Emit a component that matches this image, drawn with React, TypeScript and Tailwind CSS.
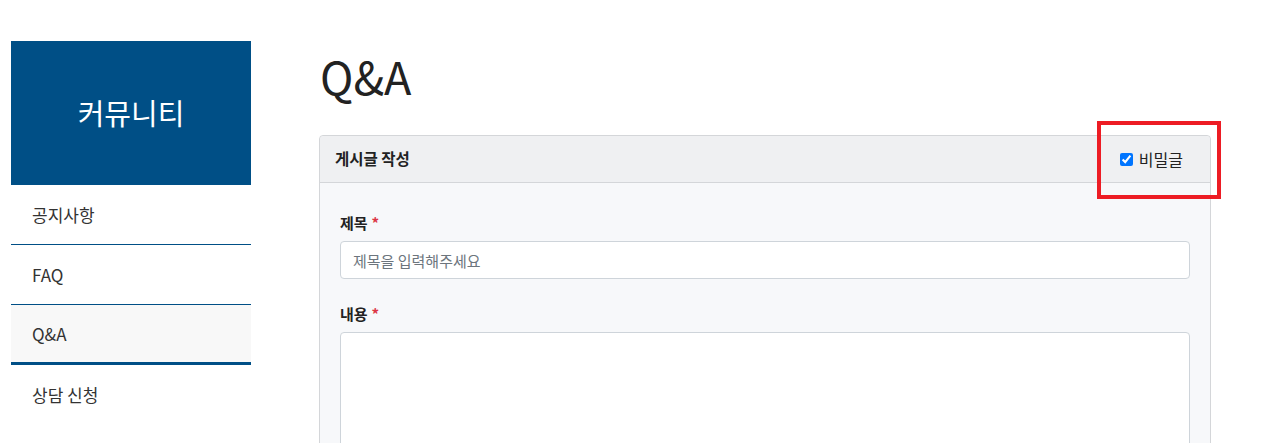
import React from "react";

const font = { fontFamily: '"Noto Sans CJK KR", "Noto Sans", sans-serif' };

function SideItem(props: { label: string; active?: boolean; last?: boolean }) {
  const { label, active, last } = props;
  let border = "border-b border-[#004f86]";
  if (active) border = "border-b-[3px] border-[#004f86] bg-[#f8f8f8]";
  if (last) border = "";
  return (
    <div className={`flex h-[60px] items-center pl-[21px] text-[17px] text-[#333] ${border}`}>
      {label}
    </div>
  );
}

export default function App() {
  return (
    <div className="min-h-[443px] w-full bg-white" style={font}>
      <div className="flex gap-[68px] pl-[11px] pt-[41px]">
        <aside className="w-[240px] shrink-0">
          <div className="flex h-[144px] items-center justify-center bg-[#004f86] text-[29px] text-white">
            커뮤니티
          </div>
          <SideItem label="공지사항" />
          <SideItem label="FAQ" />
          <SideItem label="Q&A" active />
          <SideItem label="상담 신청" last />
        </aside>

        <main className="w-[892px]">
          <h1 className="ml-px mt-[12px] h-[82px] text-[45px] leading-[45px] text-[#222]">Q&A</h1>

          <div className="relative rounded-[4px] border border-[#d4d6d9] bg-[#f7f8fa]">
            <div className="flex h-[47px] items-center justify-between rounded-t-[4px] border-b border-[#d4d6d9] bg-[#eff0f2] px-[15px]">
              <span className="text-[15.5px] font-bold text-[#222]">게시글 작성</span>
              <label className="mr-[12px] flex items-center gap-[6px] text-[16px] text-[#222]">
                <input type="checkbox" defaultChecked className="h-[13px] w-[13px] accent-[#0075ff]" />
                비밀글
              </label>
            </div>

            <div className="px-5 pt-[30px] pb-10">
              <div className="mb-[8px] flex items-center gap-1 text-[15px] font-bold leading-5 text-[#222]">
                제목 <span className="text-[#dc3545]">*</span>
              </div>
              <input
                placeholder="제목을 입력해주세요"
                className="h-[38px] w-full rounded-[4px] border border-[#ced4da] bg-white px-3 text-[15px] text-[#333] placeholder:text-[#6c757d] outline-none"
              />

              <div className="mb-[8px] mt-[25px] flex items-center gap-1 text-[15px] font-bold leading-5 text-[#222]">
                내용 <span className="text-[#dc3545]">*</span>
              </div>
              <textarea className="h-[200px] w-full resize-none rounded-[4px] border border-[#ced4da] bg-white px-3 py-2 outline-none" />
            </div>

            <div className="pointer-events-none absolute left-[777px] top-[-15px] h-[78px] w-[124px] border-[4px] border-[#ed1c24]" />
          </div>
        </main>
      </div>
    </div>
  );
}
